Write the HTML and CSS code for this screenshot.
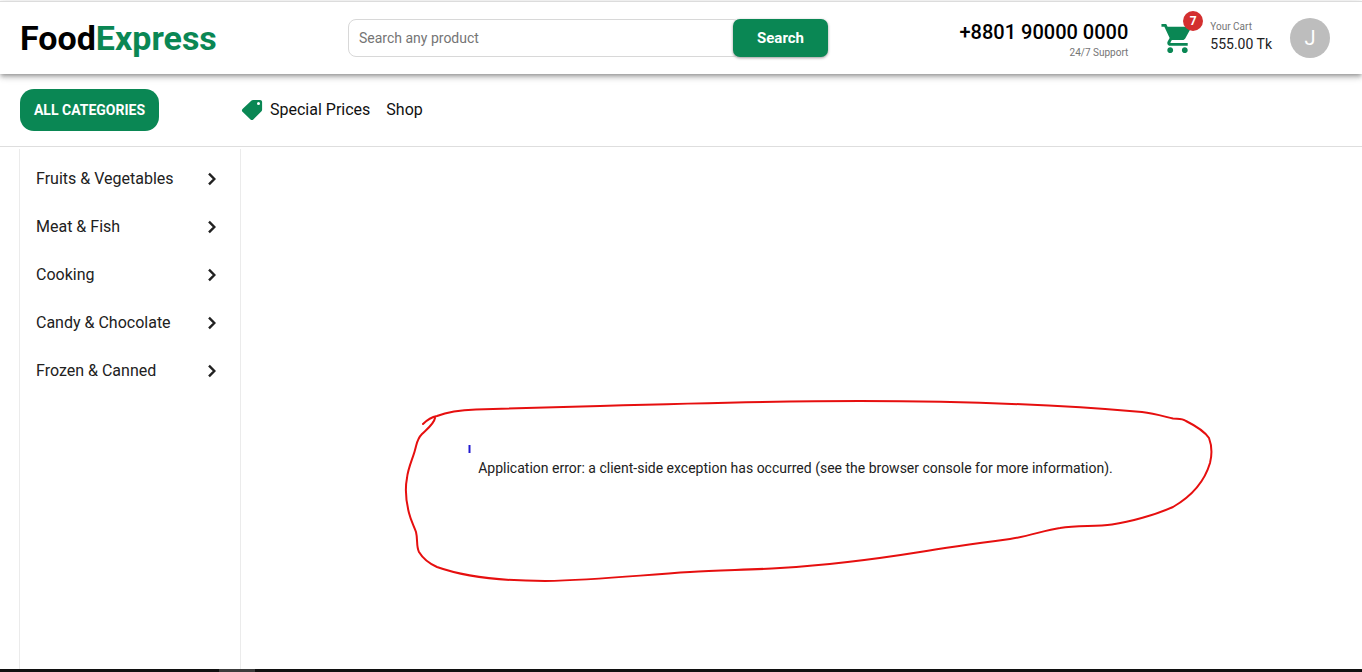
FILE: index.html
```html
<!DOCTYPE html>
<html lang="en">
<head>
<meta charset="utf-8">
<meta name="viewport" content="width=device-width, initial-scale=1">
<title>FoodExpress</title>
<link rel="stylesheet" href="styles.css">
</head>
<body>
<header class="header">
  <a class="logo" href="#">Food<span class="logo-accent">Express</span></a>
  <form class="search">
    <input class="search-input" type="text" placeholder="Search any product" aria-label="Search any product">
    <button class="search-button" type="submit">Search</button>
  </form>
  <div class="tools">
    <div class="support">
      <span class="phone">+8801 90000 0000</span>
      <span class="caption">24/7 Support</span>
    </div>
    <a class="cart" href="#">
      <span class="cart-icon">
        <svg width="35" height="35" viewBox="0 0 24 24" fill="currentColor" aria-hidden="true"><path d="M7 18c-1.100 0-1.990.9-1.990 2S5.900 22 7 22s2-.9 2-2-.9-2-2-2zM1 2v2h2l3.600 7.590-1.350 2.450c-.16.28-.25.61-.25.96 0 1.100.9 2 2 2h12v-2H7.420c-.14 0-.25-.11-.25-.25l.03-.12.9-1.630h7.450c.75 0 1.410-.41 1.750-1.030l3.580-6.490c.08-.14.12-.31.12-.48 0-.55-.45-1-1-1H5.210l-.94-2H1zm16 16c-1.100 0-1.990.9-1.990 2s.89 2 1.990 2 2-.9 2-2-.9-2-2-2z"/></svg>
        <span class="badge">7</span>
      </span>
      <span class="cart-text">
        <span class="caption">Your Cart</span>
        <span class="cart-total">555.00 Tk</span>
      </span>
    </a>
    <button class="avatar" type="button" aria-label="Account">J</button>
  </div>
</header>
<nav class="nav">
  <button class="categories-button" type="button">ALL CATEGORIES</button>
  <div class="nav-links">
    <a class="nav-link" href="#">
      <svg class="tag" width="22" height="22" viewBox="1 1 22 22" aria-hidden="true"><path fill="currentColor" fill-rule="evenodd" d="M20 2h-7c-.6 0-1.100.2-1.500.6l-9 8.400c-.8.8-.8 2 0 2.800l8 7.700c.8.8 2 .8 2.800 0l8.200-8.300c.4-.4.6-.9.6-1.400V4c0-1.100-.9-2-2-2zM18.500 7a1.500 1.500 0 1 1 0-3 1.500 1.500 0 0 1 0 3z"/></svg>
      Special Prices
    </a>
    <a class="nav-link" href="#">Shop</a>
  </div>
</nav>
<div class="content">
  <aside class="sidebar">
    <a class="category" href="#">Fruits &amp; Vegetables <svg class="chevron" width="24" height="24" viewBox="0 0 24 24"><path d="M9 6.700 14.300 12 9 17.300"/></svg></a>
    <a class="category" href="#">Meat &amp; Fish <svg class="chevron" width="24" height="24" viewBox="0 0 24 24"><path d="M9 6.700 14.300 12 9 17.300"/></svg></a>
    <a class="category" href="#">Cooking <svg class="chevron" width="24" height="24" viewBox="0 0 24 24"><path d="M9 6.700 14.300 12 9 17.300"/></svg></a>
    <a class="category" href="#">Candy &amp; Chocolate <svg class="chevron" width="24" height="24" viewBox="0 0 24 24"><path d="M9 6.700 14.300 12 9 17.300"/></svg></a>
    <a class="category" href="#">Frozen &amp; Canned <svg class="chevron" width="24" height="24" viewBox="0 0 24 24"><path d="M9 6.700 14.300 12 9 17.300"/></svg></a>
  </aside>
  <main class="main">
    <div class="error">
      <p class="error-text">Application error: a client-side exception has occurred (see the browser console for more information).</p>
      <svg class="marker" width="820" height="190" viewBox="400 396 820 190" fill="none" aria-hidden="true">
        <path stroke="#e60f0f" stroke-width="2" stroke-linecap="round" stroke-linejoin="round" d="M423 424C428 419 432 417 437 416C450 411 463 410 476 409.500L600 406C700 403 790 401 860 401C950 401 1060 405 1142 412C1155 413.500 1166 417 1173 418.500C1178 419 1182 418 1186 421C1196 426 1205 432 1209 438C1212 446 1212 455 1210 463C1205 480 1192 496 1173 507C1155 515 1130 522 1112 524.500C1095 527 1078 525 1060 528C1045 530 1030 536 1010 539C980 543 950 547 920 552C870 560 830 565 780 568C750 570 720 570 690 572C640 575 600 580 545 581C500 581 465 577 437 567C428 563 422 557 419 552C416 546 418 540 416 532C414 526 411 521 409 513C406 501 405 488 407 478C408 468 413 458 415 450C417 443 417 439 422 434C427 429 434 424 435 418"/>
        <path stroke="#221ad0" stroke-width="2" d="M469.500 445v8"/>
      </svg>
    </div>
  </main>
</div>
<footer class="bottom-strip"><div class="bottom-thumb"></div></footer>
</body>
</html>
```
FILE: styles.css
```css
* {
  box-sizing: border-box;
}

body {
  margin: 0;
  min-height: 100vh;
  display: flex;
  flex-direction: column;
  background: #fff;
  color: #212121;
  font-family: Roboto, "Liberation Sans", sans-serif;
  font-size: 16px;
  line-height: 24px;
}

a {
  color: inherit;
  text-decoration: none;
}

button {
  border: 0;
  padding: 0;
  font-family: inherit;
  cursor: pointer;
}

.header {
  position: relative;
  display: grid;
  grid-template-columns: 328px minmax(200px, 480px) 1fr;
  align-items: center;
  height: 73px;
  margin-top: 1px;
  padding: 0 32px 0 20px;
  border-top: 1px solid #dcdcdc;
  background: #fff;
  box-shadow: 0 2px 4px -1px rgba(0, 0, 0, .3), 0 4px 5px rgba(0, 0, 0, .14), 0 1px 10px rgba(0, 0, 0, .12);
}

.logo {
  color: #000;
  font-size: 34px;
  font-weight: 700;
  line-height: 42px;
}

.logo-accent {
  color: #0a8754;
}

.search {
  display: flex;
  height: 38px;
}

.search-input {
  flex: 1;
  min-width: 0;
  margin-right: -8px;
  padding: 0 10px;
  border: 1px solid #d8d8d8;
  border-radius: 8px;
  font-family: inherit;
  font-size: 14px;
}

.search-input::placeholder {
  color: #757575;
}

.search-button {
  position: relative;
  width: 95px;
  border-radius: 7px;
  background: #0a8754;
  box-shadow: 0 1px 3px rgba(0, 0, 0, .4);
  color: #fff;
  font-size: 15px;
  font-weight: 700;
}

.tools {
  display: flex;
  justify-content: flex-end;
  align-items: center;
}

.support {
  display: flex;
  flex-direction: column;
  align-items: flex-end;
  padding-top: 4px;
  margin-right: 32px;
}

.phone {
  color: #000;
  font-size: 20px;
  font-weight: 500;
  line-height: 26px;
}

.caption {
  color: #757575;
  font-size: 10px;
  line-height: 16px;
}

.cart {
  display: flex;
  align-items: center;
  gap: 15px;
  margin-right: 18px;
}

.cart-icon {
  position: relative;
  display: flex;
  color: #0a8754;
}

.badge {
  position: absolute;
  top: -10px;
  right: -8px;
  width: 20px;
  height: 20px;
  border-radius: 10px;
  background: #d32f2f;
  color: #fff;
  font-size: 12px;
  font-weight: 700;
  line-height: 20px;
  text-align: center;
}

.cart-text {
  display: flex;
  flex-direction: column;
  padding-bottom: 4px;
}

.cart-total {
  font-size: 14px;
  line-height: 18px;
}

.avatar {
  width: 40px;
  height: 40px;
  border-radius: 50%;
  background: #bdbdbd;
  color: #fff;
  font-size: 20px;
}

.nav {
  display: flex;
  align-items: center;
  height: 73px;
  padding: 0 20px;
  border-bottom: 1px solid #dedede;
}

.categories-button {
  width: 139px;
  height: 42px;
  border-radius: 14px;
  background: #0a8754;
  color: #fff;
  font-size: 14px;
  font-weight: 700;
}

.nav-links {
  display: flex;
  gap: 16px;
  margin-left: 82px;
  color: #111;
}

.nav-link {
  display: flex;
  align-items: center;
  gap: 7px;
}

.tag {
  color: #0a8754;
}

.content {
  flex: 1;
  display: flex;
  padding-left: 19px;
}

.sidebar {
  width: 222px;
  margin-top: 2px;
  padding-top: 6px;
  border: 1px solid #ebebeb;
  border-width: 0 1px;
}

.category {
  display: flex;
  align-items: center;
  justify-content: space-between;
  height: 48px;
  padding: 0 16px;
}

.chevron {
  fill: none;
  stroke: #212121;
  stroke-width: 2.4;
}

.main {
  flex: 1;
  display: flex;
  justify-content: center;
  align-items: flex-start;
  padding: 309px 20px 0 8px;
}

.error {
  position: relative;
}

.error-text {
  margin: 0;
  font-size: 14px;
}

.marker {
  position: absolute;
  top: -60px;
  left: 50%;
  margin-left: -395px;
}

.bottom-strip {
  height: 3px;
  padding-left: 219px;
  background: #101010;
}

.bottom-thumb {
  width: 36px;
  height: 3px;
  background: #3c3c3c;
}
```
